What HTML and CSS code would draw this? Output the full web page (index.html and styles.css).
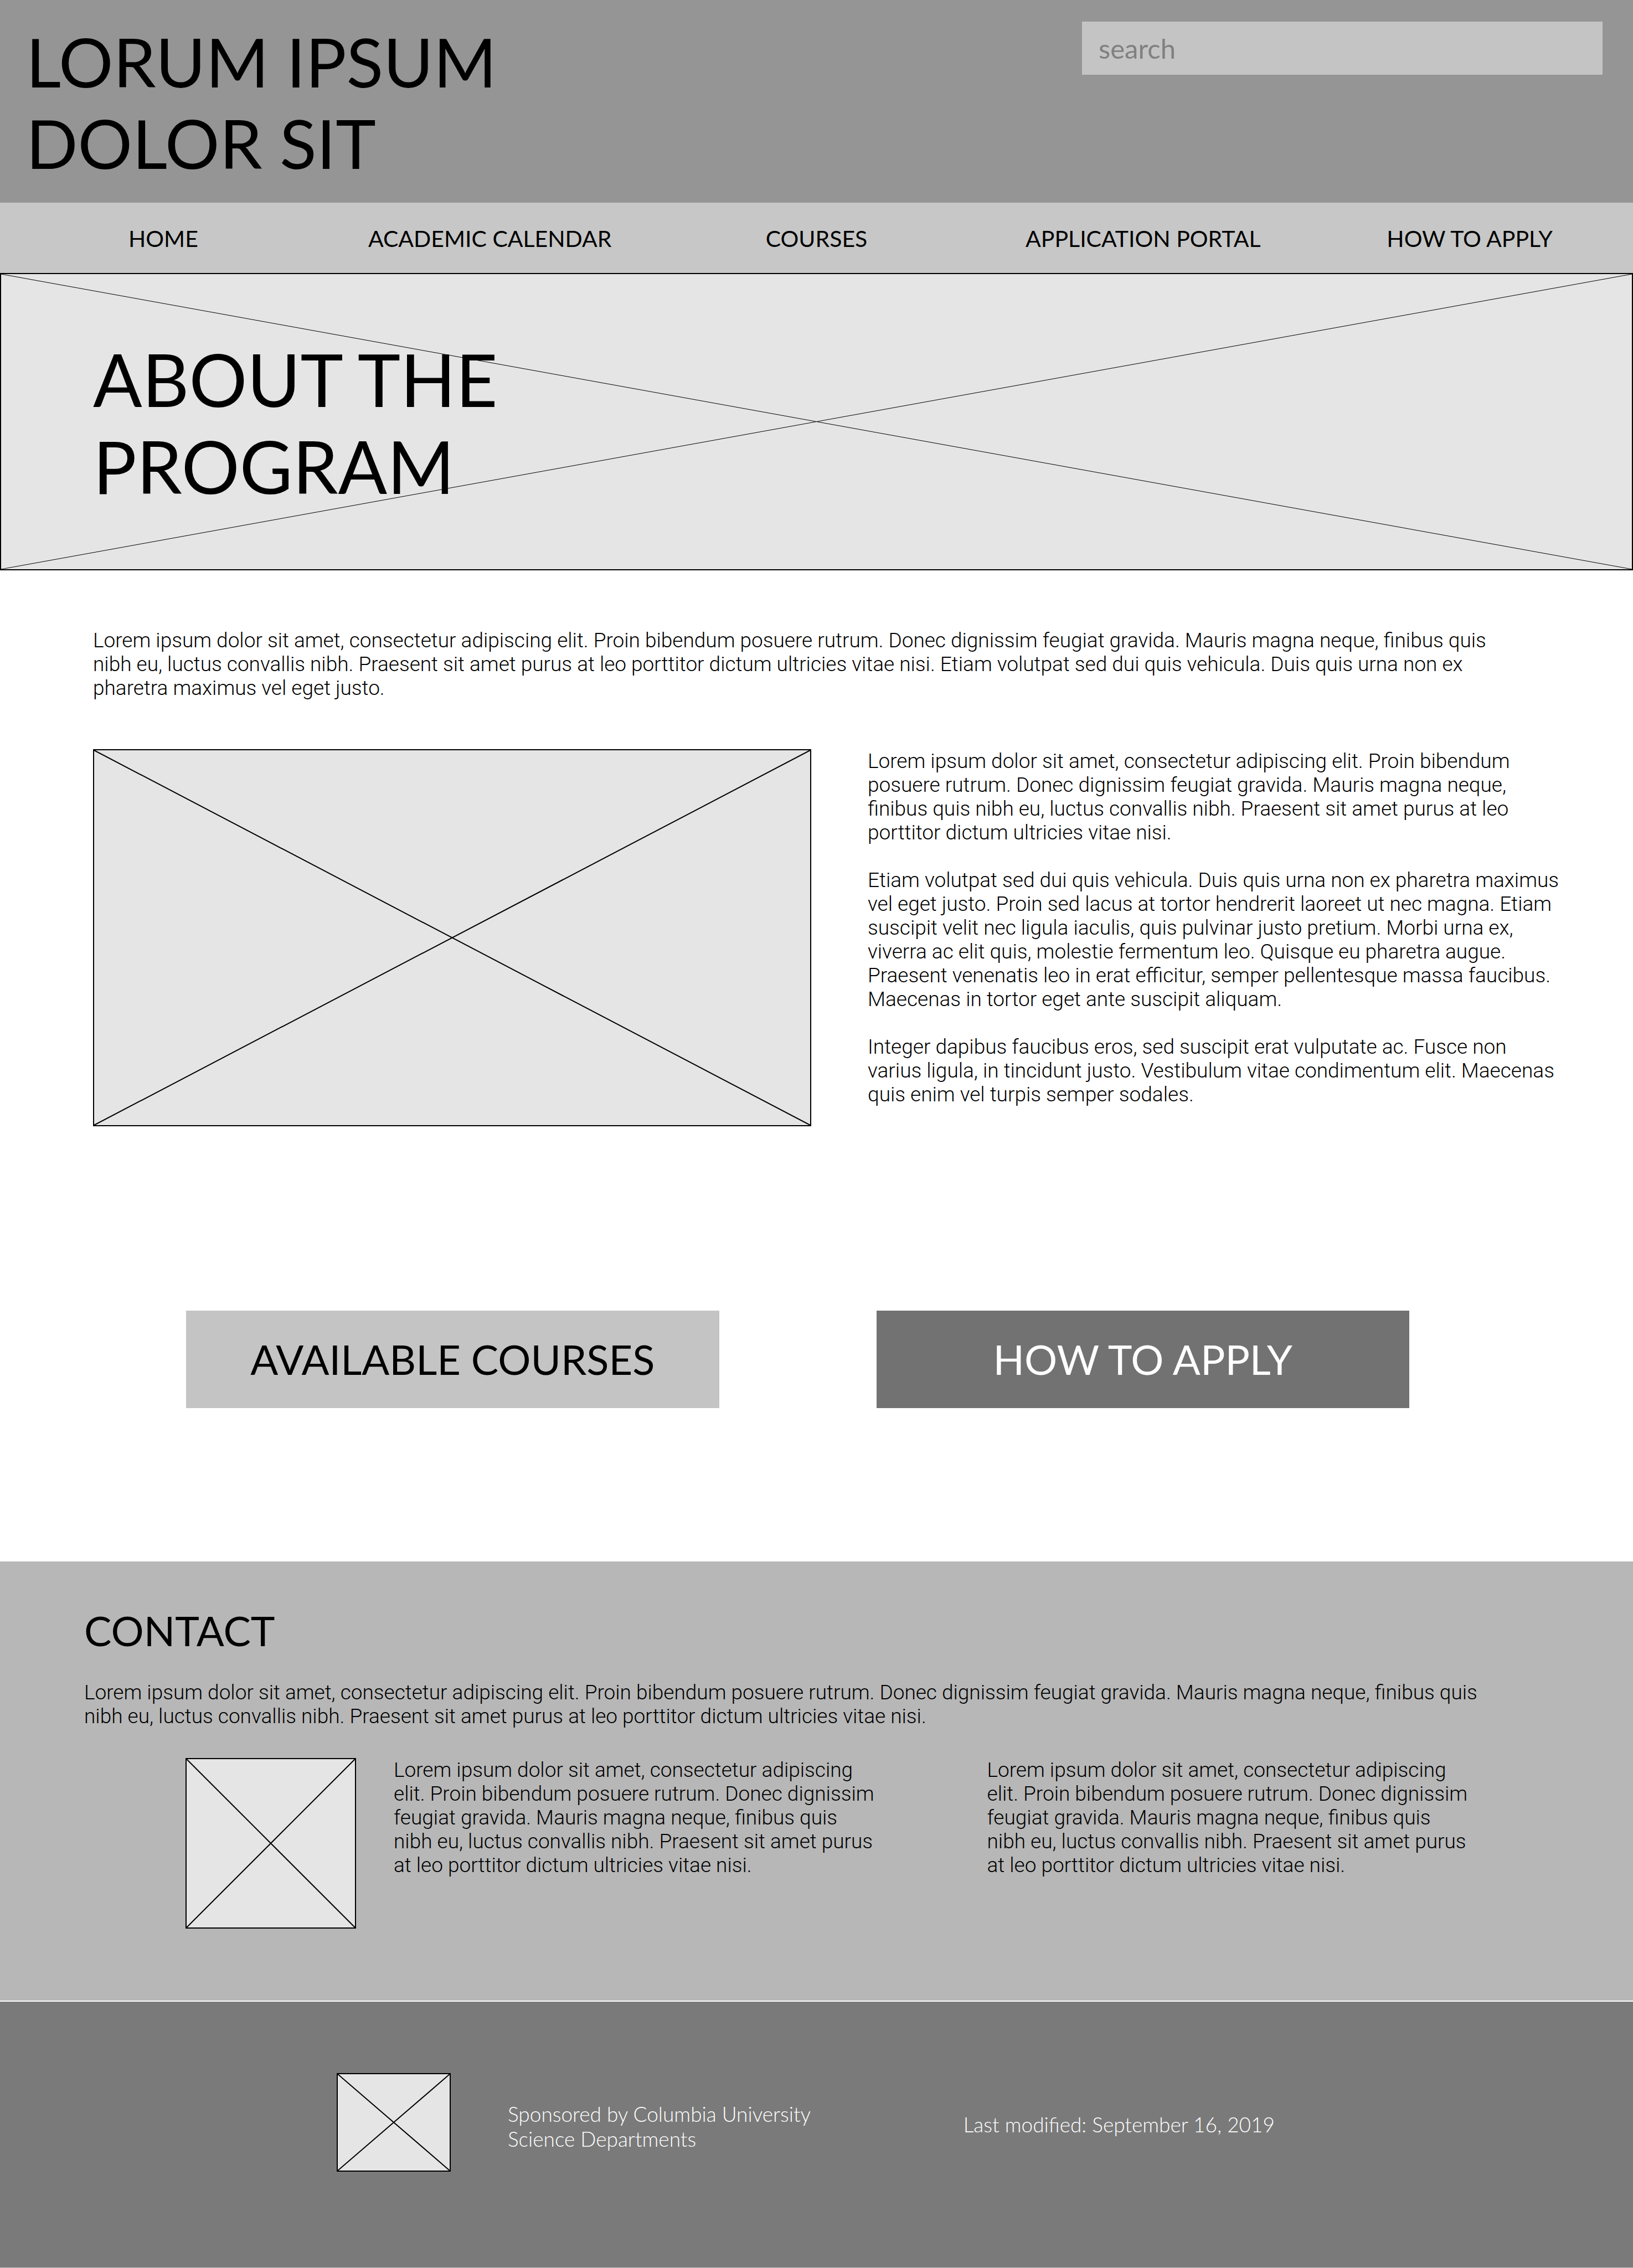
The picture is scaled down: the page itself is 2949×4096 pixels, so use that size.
FILE: index.html
```html
<!DOCTYPE html>
<html lang="en">
<head>
  <meta charset="utf-8">
  <meta name="viewport" content="width=device-width, initial-scale=1">
  <title>About the Program</title>
  <link rel="stylesheet" href="styles.css">
</head>
<body>
  <header class="site-header">
    <p class="site-title">LORUM IPSUM<br>DOLOR SIT</p>
    <form class="search" role="search">
      <input class="search-input" type="search" aria-label="search" placeholder="search">
    </form>
  </header>

  <nav class="site-nav">
    <a href="#home">HOME</a>
    <a href="#calendar">ACADEMIC CALENDAR</a>
    <a href="#courses">COURSES</a>
    <a href="#portal">APPLICATION PORTAL</a>
    <a href="#apply">HOW TO APPLY</a>
  </nav>

  <section class="hero">
    <svg class="hero-cross" viewBox="0 0 100 100" preserveAspectRatio="none" aria-hidden="true">
      <path d="M0 0L100 100M100 0L0 100"/>
    </svg>
    <h1 class="hero-title">ABOUT THE<br>PROGRAM</h1>
  </section>

  <main class="main">
    <p class="intro">Lorem ipsum dolor sit amet, consectetur adipiscing elit. Proin bibendum posuere rutrum. Donec dignissim feugiat gravida. Mauris magna neque, finibus quis nibh eu, luctus convallis nibh. Praesent sit amet purus at leo porttitor dictum ultricies vitae nisi. Etiam volutpat sed dui quis vehicula. Duis quis urna non ex pharetra maximus vel eget justo.</p>

    <div class="feature">
      <div class="placeholder placeholder-wide">
        <svg viewBox="0 0 100 100" preserveAspectRatio="none" aria-hidden="true"><path d="M0 0L100 100M100 0L0 100"/></svg>
      </div>
      <div class="feature-text">
        <p>Lorem ipsum dolor sit amet, consectetur adipiscing elit. Proin bibendum posuere rutrum. Donec dignissim feugiat gravida. Mauris magna neque, finibus quis nibh eu, luctus convallis nibh. Praesent sit amet purus at leo porttitor dictum ultricies vitae nisi.</p>
        <p>Etiam volutpat sed dui quis vehicula. Duis quis urna non ex pharetra maximus vel eget justo. Proin sed lacus at tortor hendrerit laoreet ut nec magna. Etiam suscipit velit nec ligula iaculis, quis pulvinar justo pretium. Morbi urna ex, viverra ac elit quis, molestie fermentum leo. Quisque eu pharetra augue. Praesent venenatis leo in erat efficitur, semper pellentesque massa faucibus. Maecenas in tortor eget ante suscipit aliquam.</p>
        <p>Integer dapibus faucibus eros, sed suscipit erat vulputate ac. Fusce non varius ligula, in tincidunt justo. Vestibulum vitae condimentum elit. Maecenas quis enim vel turpis semper sodales.</p>
      </div>
    </div>

    <div class="actions">
      <button class="action" type="button">AVAILABLE COURSES</button>
      <button class="action action-dark" type="button">HOW TO APPLY</button>
    </div>
  </main>

  <section class="contact">
    <h2 class="contact-title">CONTACT</h2>
    <p class="contact-intro">Lorem ipsum dolor sit amet, consectetur adipiscing elit. Proin bibendum posuere rutrum. Donec dignissim feugiat gravida. Mauris magna neque, finibus quis nibh eu, luctus convallis nibh. Praesent sit amet purus at leo porttitor dictum ultricies vitae nisi.</p>
    <div class="contact-row">
      <div class="placeholder placeholder-square">
        <svg viewBox="0 0 100 100" preserveAspectRatio="none" aria-hidden="true"><path d="M0 0L100 100M100 0L0 100"/></svg>
      </div>
      <div class="contact-columns">
        <p>Lorem ipsum dolor sit amet, consectetur adipiscing elit. Proin bibendum posuere rutrum. Donec dignissim feugiat gravida. Mauris magna neque, finibus quis nibh eu, luctus convallis nibh. Praesent sit amet purus at leo porttitor dictum ultricies vitae nisi.</p>
        <p>Lorem ipsum dolor sit amet, consectetur adipiscing elit. Proin bibendum posuere rutrum. Donec dignissim feugiat gravida. Mauris magna neque, finibus quis nibh eu, luctus convallis nibh. Praesent sit amet purus at leo porttitor dictum ultricies vitae nisi.</p>
      </div>
    </div>
  </section>

  <footer class="site-footer">
    <div class="placeholder placeholder-logo">
      <svg viewBox="0 0 100 100" preserveAspectRatio="none" aria-hidden="true"><path d="M0 0L100 100M100 0L0 100"/></svg>
    </div>
    <p class="sponsor">Sponsored by Columbia University<br>Science Departments</p>
    <p class="modified">Last modified: September 16, 2019</p>
  </footer>
</body>
</html>
```

FILE: styles.css
```css
* {
  box-sizing: border-box;
}

body {
  margin: 0;
  background: #fff;
  color: #000;
  font: 300 37px/43px Roboto, "Liberation Sans", sans-serif;
}

h1, h2, p {
  margin: 0;
  font-weight: inherit;
}

/* Header */
.site-header {
  display: flex;
  justify-content: space-between;
  align-items: flex-start;
  padding: 37px 55px 35px 47px;
  background: #959595;
}

.site-title {
  font: 400 123px/147px Lato, sans-serif;
}

.search {
  flex: 0 1 940px;
  padding-top: 2px;
}

.search-input {
  display: block;
  width: 100%;
  height: 96px;
  padding: 0 30px;
  border: 0;
  border-radius: 0;
  background: #c4c4c4;
  color: #000;
  font: 400 49px/60px Lato, sans-serif;
  appearance: none;
}

.search-input::placeholder {
  color: #808080;
  opacity: 1;
}

/* Navigation */
.site-nav {
  display: grid;
  grid-template-columns: repeat(5, 1fr);
  padding: 40px 0 38px;
  background: #c7c7c7;
  font: 400 41px/49px Lato, sans-serif;
  text-align: center;
}

.site-nav a {
  color: inherit;
  text-decoration: none;
}

/* Hero */
.hero {
  position: relative;
  padding: 111px 166px 108px;
  border: 2px solid #000;
  background: #e5e5e5;
}

.hero-cross {
  position: absolute;
  inset: 0;
  width: 100%;
  height: 100%;
}

.hero-cross path,
.placeholder path {
  fill: none;
  stroke: #000;
  stroke-width: 2px;
  vector-effect: non-scaling-stroke;
}

.hero-cross path {
  stroke-width: 1px;
}

.hero-title {
  position: relative;
  font: 400 131px/157px Lato, sans-serif;
}

/* Crossed boxes that stand in for images */
.placeholder {
  border: 2px solid #000;
  background: #e5e5e5;
}

.placeholder svg {
  display: block;
  width: 100%;
  height: 100%;
}

/* Main content */
.main {
  padding: 105px 129px 277px 168px;
}

.intro {
  max-width: 2532px;
}

.feature {
  display: grid;
  grid-template-columns: 1297fr 1253fr;
  align-items: start;
  gap: 102px;
  margin-top: 89px;
}

.placeholder-wide {
  aspect-ratio: 1297 / 681;
}

.feature-text {
  display: grid;
  gap: 43px;
}

.actions {
  display: grid;
  grid-template-columns: 1fr 1fr;
  gap: 284px;
  margin-top: 333px;
  padding: 0 275px 0 168px;
}

.action {
  padding: 44px 0;
  border: 0;
  background: #c4c4c4;
  color: #000;
  font: 400 74px/88px Lato, sans-serif;
}

.action-dark {
  background: #727272;
  color: #fff;
}

/* Contact */
.contact {
  padding: 80px 152px 130px;
  border-bottom: 2px solid #fff;
  background: #b7b7b7;
}

.contact-title {
  font: 400 74px/89px Lato, sans-serif;
}

.contact-intro {
  max-width: 2532px;
  margin-top: 46px;
}

.contact-row {
  display: flex;
  align-items: flex-start;
  gap: 68px;
  margin-top: 54px;
  padding: 0 141px 0 183px;
}

.contact-columns {
  flex: 1;
  display: grid;
  grid-template-columns: 1fr 1fr;
  gap: 198px;
}

.placeholder-square {
  flex: none;
  width: 308px;
  height: 308px;
}

/* Footer */
.site-footer {
  display: flex;
  align-items: flex-start;
  padding: 129px 647px 173px 608px;
  border-bottom: 1px solid #c7c7c7;
  background: #7a7a7a;
  color: #fff;
  font: 300 37px/45px Lato, sans-serif;
}

.placeholder-logo {
  flex: none;
  width: 206px;
  height: 178px;
}

.sponsor {
  margin: 51px 0 0 103px;
}

.modified {
  margin: 70px 0 0 auto;
}
```
